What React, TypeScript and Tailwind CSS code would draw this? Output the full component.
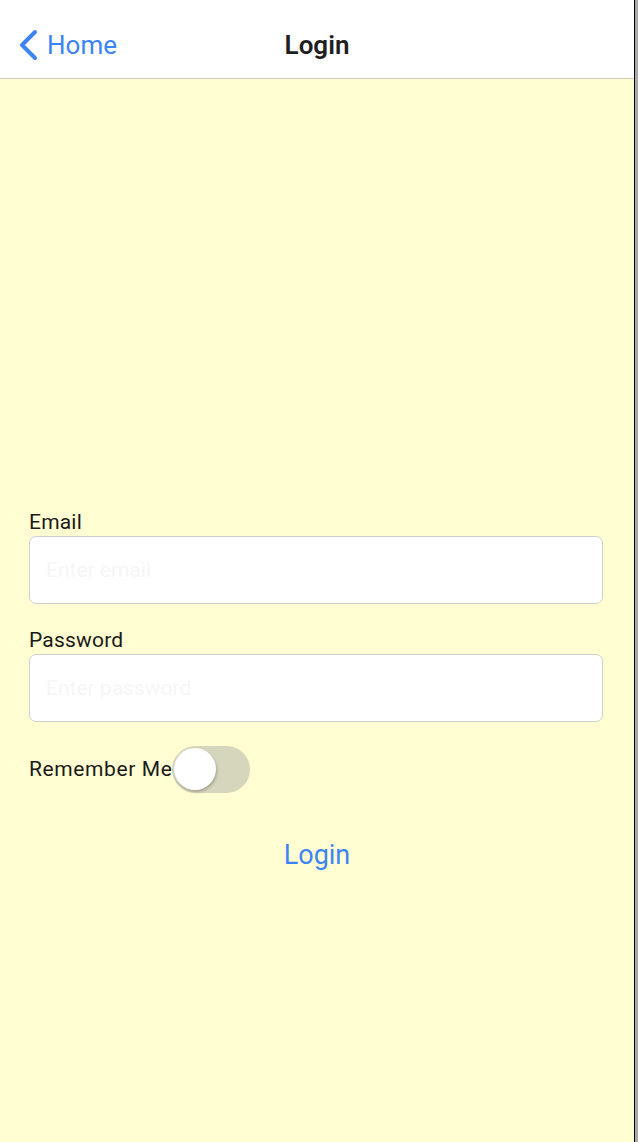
import React, { useState } from 'react';

function Toggle({ on, onChange }: { on: boolean; onChange: (v: boolean) => void }) {
  return (
    <button
      type="button"
      onClick={() => onChange(!on)}
      className={`relative w-[78px] h-[47px] rounded-full shrink-0 ${on ? 'bg-[#4cd964]' : 'bg-[#d6d6bc]'}`}
    >
      <span
        className={`absolute top-[2px] w-[42px] h-[42px] rounded-full bg-white shadow-[1px_2px_3px_rgba(0,0,0,0.22)] ${
          on ? 'left-[34px]' : 'left-[2px]'
        }`}
      />
    </button>
  );
}

export default function App() {
  const [remember, setRemember] = useState(false);

  return (
    <div className="flex w-[638px] h-[1142px] bg-[#a9a9a9]" style={{ fontFamily: 'Roboto, "Liberation Sans", sans-serif' }}>
      <div className="flex flex-col w-[634px] h-full bg-[#fffdd1]">
        {/* Nav bar */}
        <div className="relative flex items-center h-[79px] pt-[12px] bg-white border-b border-[#cfceb4] shrink-0">
          <button type="button" className="flex items-center gap-[8px] pl-[17px] text-[#3d84f7]">
            <svg width="22" height="32" viewBox="0 0 22 32" fill="none">
              <path d="M18 3 L5 16 L18 29" stroke="#3d84f7" strokeWidth="4" strokeLinecap="round" strokeLinejoin="round" />
            </svg>
            <span className="text-[26px] leading-none">Home</span>
          </button>
          <div className="absolute left-0 right-0 top-[12px] bottom-0 flex items-center justify-center text-[26px] font-semibold text-[#1f1f1f] pointer-events-none">
            Login
          </div>
        </div>

        {/* Form */}
        <div className="flex flex-col px-[29px] pt-[431px]">
          <label className="text-[21px] leading-[25px] tracking-[0.2px] text-[#1a1a1a]">Email</label>
          <input
            type="email"
            placeholder="Enter email"
            className="mt-[1px] w-[574px] h-[68px] rounded-[7px] border border-[#cfcfcf] bg-white px-[16px] text-[21px] outline-none placeholder:text-[#f6f6f6]"
          />
          <label className="mt-[24px] text-[21px] leading-[25px] tracking-[0.2px] text-[#1a1a1a]">Password</label>
          <input
            type="password"
            placeholder="Enter password"
            className="mt-[1px] w-[574px] h-[68px] rounded-[7px] border border-[#cfcfcf] bg-white px-[16px] text-[21px] outline-none placeholder:text-[#f6f6f6]"
          />
          <div className="flex items-center mt-[24px]">
            <span className="text-[21px] tracking-[0.6px] text-[#1a1a1a]">Remember Me</span>
            <Toggle on={remember} onChange={setRemember} />
          </div>
          <button type="button" className="self-center mt-[42px] text-[27px] text-[#3d84f7]">
            Login
          </button>
        </div>
      </div>
      <div className="w-[1px] h-full bg-black" />
    </div>
  );
}
